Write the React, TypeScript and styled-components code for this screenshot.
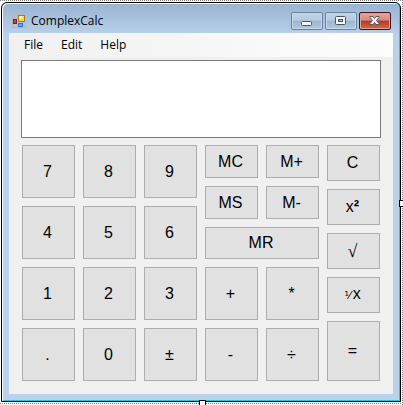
import React from "react";
import styled, { createGlobalStyle, css } from "styled-components";

const GlobalStyle = createGlobalStyle`
  *, *::before, *::after { box-sizing: border-box; }
  body {
    margin: 0;
    background: #fff;
    color: #000;
    font-family: "Open Sans", "Noto Sans", sans-serif;
  }
`;

const Designer = styled.div`
  position: relative;
  overflow: hidden;
  padding: 2px 2px 3px 1px;
`;

const dots = "#777 0 1px, #fff 1px 2px";

const DottedTop = styled.div`
  position: absolute;
  top: 0;
  left: 0;
  right: 0;
  height: 1px;
  background: repeating-linear-gradient(90deg, ${dots});
`;

const DottedBottom = styled(DottedTop)`
  top: auto;
  bottom: 1px;
`;

const DottedRight = styled.div`
  position: absolute;
  top: 0;
  bottom: 0;
  right: 0;
  width: 1px;
  background: repeating-linear-gradient(180deg, ${dots});
`;

const Handle = styled.span<{ $side: "right" | "bottom" }>`
  position: absolute;
  width: 7px;
  height: 7px;
  border: 1px solid #000;
  background: #fff;
  ${(p) =>
    p.$side === "right"
      ? css`right: -3px; top: calc(50% - 3px);`
      : css`bottom: -2px; left: calc(50% - 3px);`}
`;

const Window = styled.section`
  padding: 1px 7px 7px;
  border: 1px solid #000;
  border-radius: 6px 6px 0 0;
  background: linear-gradient(180deg, #98b3d1 0, #b9d1ea 32px, #b9d1ea 100%);
  box-shadow: inset 1px 1px #fff, inset -1px -1px #2cc4e0;
`;

const TitleBar = styled.header`
  display: flex;
  align-items: center;
  height: 29px;
  padding: 5px 0 0 3px;
  gap: 5px;
`;

const Title = styled.h1`
  flex: 1;
  margin: 0;
  font-size: 12px;
  line-height: 16px;
  font-weight: 400;
`;

const Captions = styled.div`
  display: flex;
  gap: 2px;
  padding-right: 2px;
`;

const Caption = styled.button<{ $close?: boolean }>`
  display: flex;
  align-items: center;
  justify-content: center;
  width: 32px;
  height: 18px;
  padding: 0;
  border: 1px solid ${(p) => (p.$close ? "#4a1020" : "#66809f")};
  border-radius: 2px;
  background: ${(p) =>
    p.$close
      ? "linear-gradient(#e4a69b 0, #d68a7c 45%, #b83a20 50%, #cb6a4e 100%)"
      : "linear-gradient(#c0d3e7 0, #b6cbe1 45%, #9cb6d1 50%, #b0c8e0 100%)"};
  box-shadow: inset 0 0 0 1px ${(p) => (p.$close ? "#e0a196" : "#c8d9eb")};
`;

const Client = styled.main`
  background: #f0f0f0;
  padding-bottom: 13px;
`;

const Menu = styled.nav`
  display: flex;
  align-items: center;
  gap: 2px;
  height: 24px;
  padding-left: 7px;
  background: linear-gradient(90deg, #f0f0f0, #fdfdfd);
`;

const MenuItem = styled.button`
  padding: 0 8px;
  border: 0;
  background: transparent;
  color: #000;
  font: 12px/20px "Open Sans", "Noto Sans", sans-serif;
`;

const Display = styled.textarea`
  display: block;
  width: calc(100% - 24px);
  height: 78px;
  margin: 3px 12px 7px;
  padding: 4px;
  border: 1px solid #7a7a7a;
  background: #fff;
  resize: none;
  outline: 0;
  font: 16px "Liberation Sans", sans-serif;
`;

const Keypad = styled.div`
  display: grid;
  grid-template-columns: repeat(6, 1fr);
  gap: 8px;
  margin: 0 13px;
`;

const Pad = styled.div`
  display: grid;
  gap: 8px;
`;

const Digits = styled(Pad)`
  grid-column: span 3;
  grid-template-columns: repeat(3, 1fr);
  grid-template-rows: repeat(4, 53px);
`;

const Operators = styled(Pad)`
  grid-column: span 2;
  grid-template-columns: repeat(2, 1fr);
  grid-template-rows: 33px 33px 32px 53px 53px;
`;

const Functions = styled(Pad)`
  grid-template-rows: repeat(4, 36px) 60px;
`;

const Key = styled.button<{ $wide?: boolean }>`
  min-width: 0;
  padding: 0 2px 0 0;
  border: 1px solid #adadad;
  background: #e1e1e1;
  color: #000;
  font: 16px/20px "Liberation Sans", Arial, sans-serif;
  ${(p) => p.$wide && css`grid-column: span 2;`}
`;

const Root = styled.span`
  font-family: "Liberation Serif", serif;
  font-size: 18px;
`;

const Reciprocal = styled.span`
  margin-right: 2px;
  font-family: "DejaVu Sans", sans-serif;
  font-size: 11px;
`;

const FormIcon = () => (
  <svg width="14" height="14" viewBox="0 0 14 14" aria-hidden="true">
    <rect x="0.5" y="0.5" width="13" height="13" fill="none" stroke="#b0b8c2" />
    <rect x="1.5" y="5.5" width="3" height="4" fill="#d8402c" stroke="#8f1a14" />
    <rect x="6.5" y="1.5" width="6" height="6" fill="#fbd04a" stroke="#b07c10" />
    <rect x="7" y="2" width="4" height="3" fill="#ffeaa0" />
    <rect x="6.5" y="9.5" width="4" height="3" fill="#6ea2f4" stroke="#3c6cc8" />
  </svg>
);

const MinimizeIcon = () => (
  <svg width="12" height="12" viewBox="0 0 12 12" aria-hidden="true">
    <rect x="0.5" y="6.5" width="10" height="4" rx="1" fill="#f6f6f0" stroke="#4c5566" />
  </svg>
);

const MaximizeIcon = () => (
  <svg width="12" height="10" viewBox="0 0 12 10" aria-hidden="true">
    <rect x="0.5" y="0.5" width="10" height="8" rx="1" fill="#f6f6f6" stroke="#4c5566" />
    <rect x="3.5" y="3.5" width="4" height="2" fill="#a9c0da" stroke="#4c5566" />
  </svg>
);

const CloseIcon = () => (
  <svg width="12" height="10" viewBox="0 0 12 10" aria-hidden="true">
    <path
      d="M1 .5h3l1.5 2 1.5-2h3v1l-2.5 3 2.5 3v1h-3l-1.5-2-1.5 2h-3v-1l2.5-3-2.5-3z"
      fill="#f4f4f4"
      stroke="#565966"
    />
  </svg>
);

const digits = ["7", "8", "9", "4", "5", "6", "1", "2", "3", ".", "0", "±"];
const operators = ["MC", "M+", "MS", "M-", "MR", "+", "*", "-", "÷"];

export default function App() {
  return (
    <>
      <GlobalStyle />
      <Designer>
        <DottedTop />
        <DottedBottom />
        <DottedRight />
        <Window>
          <TitleBar>
            <FormIcon />
            <Title>ComplexCalc</Title>
            <Captions>
              <Caption aria-label="Minimize"><MinimizeIcon /></Caption>
              <Caption aria-label="Maximize"><MaximizeIcon /></Caption>
              <Caption aria-label="Close" $close><CloseIcon /></Caption>
            </Captions>
          </TitleBar>
          <Client>
            <Menu>
              <MenuItem>File</MenuItem>
              <MenuItem>Edit</MenuItem>
              <MenuItem>Help</MenuItem>
            </Menu>
            <Display aria-label="Display" />
            <Keypad>
              <Digits>
                {digits.map((d) => <Key key={d}>{d}</Key>)}
              </Digits>
              <Operators>
                {operators.map((o) => <Key key={o} $wide={o === "MR"}>{o}</Key>)}
              </Operators>
              <Functions>
                <Key>C</Key>
                <Key>x<b>²</b></Key>
                <Key><Root>√</Root></Key>
                <Key><Reciprocal>⅟</Reciprocal>x</Key>
                <Key>=</Key>
              </Functions>
            </Keypad>
          </Client>
        </Window>
        <Handle $side="right" />
        <Handle $side="bottom" />
      </Designer>
    </>
  );
}
